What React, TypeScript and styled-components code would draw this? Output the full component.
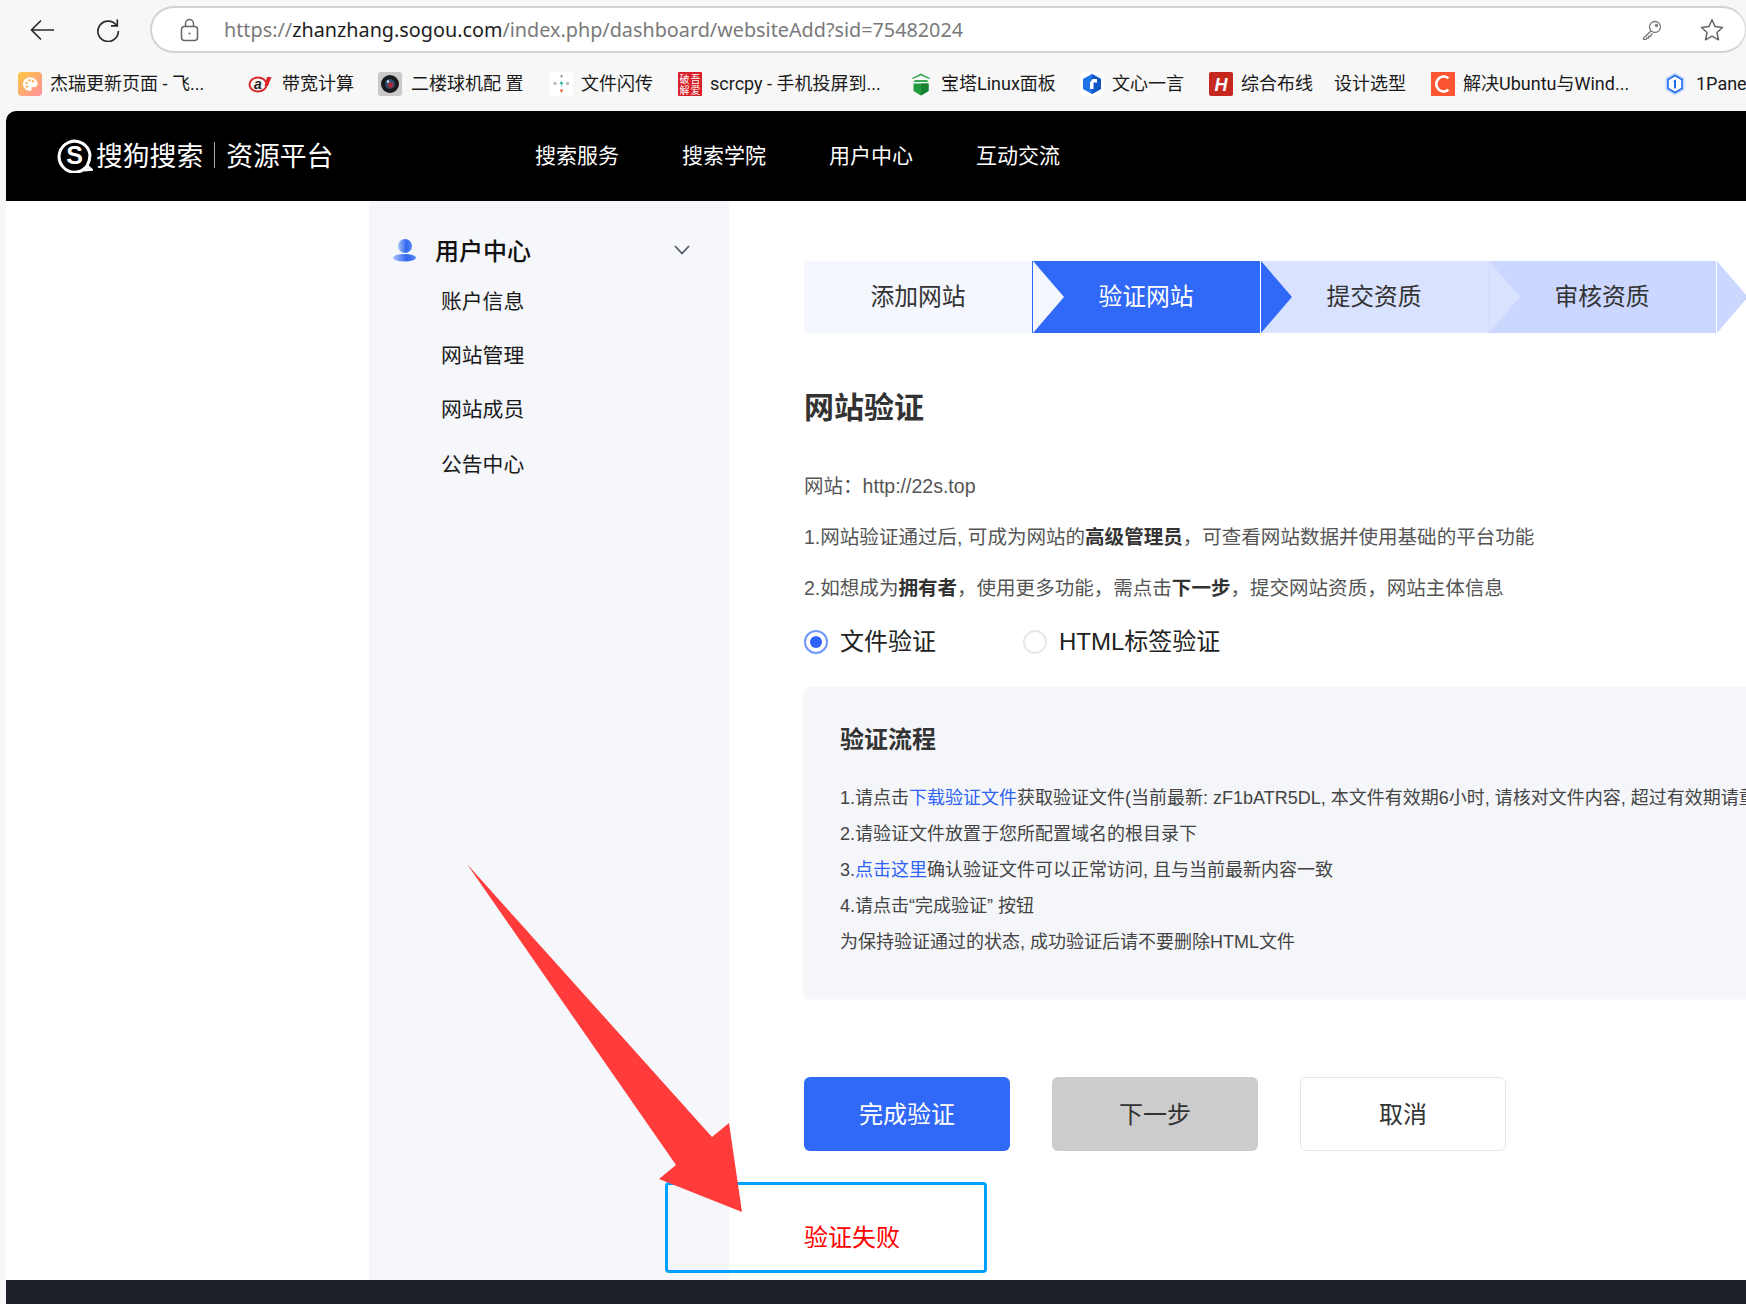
import React from "react";
import styled, { createGlobalStyle } from "styled-components";

const CJK = `"Noto Sans CJK SC", sans-serif`;
const BODY = `"Liberation Sans", ${CJK}`;
const UI = `"Noto Sans", ${CJK}`;
const TAB = `Roboto, ${CJK}`;

const Global = createGlobalStyle`
  html, body { margin: 0; padding: 0; width: 1746px; height: 1304px; overflow: hidden; background: #f7f7f7; }
  #root { width: 1746px; height: 1304px; }
  * { box-sizing: border-box; }
`;

const Shell = styled.div`
  position: relative;
  width: 1746px;
  height: 1304px;
  overflow: hidden;
  background: #f7f7f7;
  display: flex;
  flex-direction: column;
`;

const BrowserChrome = styled.div`
  height: 111px;
  flex: none;
  padding-top: 6px;
`;

const Toolbar = styled.div`
  display: flex;
  align-items: center;
  height: 47px;
  padding-left: 30px;
`;

const ToolIcon = styled.svg<{ $gap: number }>`
  flex: none;
  margin-right: ${(p) => p.$gap}px;
`;

const AddressBar = styled.div`
  flex: 1;
  height: 47px;
  display: flex;
  align-items: center;
  padding-left: 28px;
  background: #fff;
  border: 2px solid #d2d2d2;
  border-right-width: 1px;
  border-radius: 24px;
`;

const Url = styled.div`
  flex: 1;
  margin-left: 25px;
  padding-top: 1px;
  font: 400 19.8px/28px ${UI};
  color: #7a7a7a;
  white-space: nowrap;
  span { color: #1c1c1c; }
`;

const BarIcon = styled.svg<{ $gap: number }>`
  flex: none;
  margin-right: ${(p) => p.$gap}px;
`;

const Bookmarks = styled.div`
  display: flex;
  align-items: center;
  height: 24px;
  margin-top: 19px;
  padding-left: 18px;
  white-space: nowrap;
`;

const Bookmark = styled.div<{ $w: number; $gap: number }>`
  flex: none;
  width: ${(p) => p.$w}px;
  display: flex;
  align-items: center;
  gap: ${(p) => p.$gap}px;
  font: 400 18px/24px ${TAB};
  color: #1a1a1a;
`;

const Page = styled.div`
  flex: 1;
  margin-left: 6px;
  display: flex;
  flex-direction: column;
  background: #fff;
  border-top-left-radius: 10px;
  overflow: hidden;
`;

const Header = styled.header`
  height: 90px;
  flex: none;
  background: #000;
  display: flex;
  align-items: center;
  color: #fff;
  padding-left: 51px;
`;

const Logo = styled.div`
  display: flex;
  align-items: center;
  width: 478px;
  padding-bottom: 2px;
  font: 400 26.8px/36px ${CJK};
`;

const LogoMark = styled.svg`
  flex: none;
  margin-right: 3px;
`;

const LogoDivider = styled.i`
  width: 1px;
  height: 26px;
  margin: 0 11px 0 11px;
  background: #aaa;
`;

const Nav = styled.nav`
  display: flex;
  gap: 63px;
  padding-bottom: 4px;
  font: 400 21px/30px ${CJK};
`;

const Body = styled.div`
  flex: 1;
  min-height: 0;
  display: flex;
  padding-left: 363px;
`;

const Sidebar = styled.aside`
  flex: none;
  width: 360px;
  background: #f5f7fb;
  padding-top: 34px;
`;

const SideTitle = styled.div`
  display: flex;
  align-items: center;
  height: 30px;
  padding-left: 24px;
  font: 500 24px/30px ${CJK};
  color: #111;
`;

const SideIcon = styled.svg`
  flex: none;
`;

const SideTitleText = styled.span`
  margin-left: 19px;
  width: 239px;
`;

const SideItem = styled.div`
  height: 54.2px;
  padding-left: 72px;
  font: 400 20.8px/54px ${CJK};
  color: #1a1a1a;
`;

const SideList = styled.div`
  margin-top: 8px;
`;

const Main = styled.main`
  flex: 1;
  min-width: 0;
  padding: 60px 0 0 75px;
  overflow: hidden;
`;

const Steps = styled.div`
  display: flex;
  height: 72px;
`;

const Step = styled.div<{ $bg: string; $fg: string; $line: string; $z: number }>`
  position: relative;
  flex: none;
  width: 228px;
  height: 72px;
  background: ${(p) => p.$bg};
  color: ${(p) => p.$fg};
  box-shadow: 1px 0 0 ${(p) => p.$line};
  font: 400 23.8px/68px ${CJK};
  text-align: center;
  z-index: ${(p) => p.$z};
  &::after {
    content: "";
    position: absolute;
    top: 0;
    left: calc(100% + 1px);
    width: 31px;
    height: 72px;
    background: ${(p) => p.$bg};
    clip-path: polygon(0 0, 100% 50%, 0 100%);
  }
`;

const Heading = styled.h1`
  margin: 52px 0 0;
  font: 700 30px/40px ${CJK};
  color: #333;
`;

const Intro = styled.div`
  margin-top: 36px;
  font: 400 19.54px/51px ${BODY};
  color: #555;
  white-space: nowrap;
  b { color: #333; font-weight: 700; }
`;

const Radios = styled.div`
  display: flex;
  align-items: center;
  height: 24px;
  margin-top: 16px;
  font: 400 24px/24px ${BODY};
  color: #222;
`;

const Radio = styled.span<{ $on?: boolean; $left?: number }>`
  flex: none;
  width: 24px;
  height: 24px;
  margin-left: ${(p) => p.$left ?? 0}px;
  margin-right: 12px;
  border-radius: 50%;
  border: 2px solid ${(p) => (p.$on ? "#6f96fb" : "#e8e8e8")};
  display: flex;
  align-items: center;
  justify-content: center;
  &::after {
    content: "";
    width: 12px;
    height: 12px;
    border-radius: 50%;
    background: ${(p) => (p.$on ? "#2e62f6" : "transparent")};
  }
`;

const Panel = styled.section`
  margin-top: 33px;
  width: 1100px;
  height: 311px;
  padding: 33px 0 0 36px;
  background: #f5f6fa;
  border-radius: 6px;
  box-shadow: 0 1px 4px rgba(0, 0, 0, 0.05);
  white-space: nowrap;
`;

const PanelTitle = styled.h2`
  margin: 0;
  font: 700 24px/36px ${CJK};
  color: #333;
`;

const PanelLines = styled.div`
  margin-top: 24px;
  font: 400 18px/36px ${BODY};
  color: #444;
  a { color: #2e62f6; text-decoration: none; }
`;

const Actions = styled.div`
  display: flex;
  gap: 42px;
  margin-top: 79px;
`;

const Button = styled.button<{ $kind: "primary" | "muted" | "plain" }>`
  width: 206px;
  height: 74px;
  border-radius: 6px;
  font: 400 24px/30px ${CJK};
  padding: 0 0 2px;
  background: ${(p) => (p.$kind === "primary" ? "#3068f8" : p.$kind === "muted" ? "#cccccc" : "#fff")};
  color: ${(p) => (p.$kind === "primary" ? "#fff" : "#333")};
  border: ${(p) => (p.$kind === "plain" ? "1.5px solid #e6e6e6" : "none")};
`;

const Footer = styled.footer`
  height: 24px;
  flex: none;
  background: #1e2129;
`;

const FailBox = styled.div`
  position: absolute;
  left: 665px;
  top: 1182px;
  width: 322px;
  height: 91px;
  border: 3px solid #00a0ff;
  border-radius: 4px;
  padding: 34px 0 0 136px;
  font: 400 24px/34px ${CJK};
  color: #ff0000;
`;

const ArrowMark = styled.svg`
  position: absolute;
  left: 0;
  top: 0;
  pointer-events: none;
`;

const FaviconSvg = styled.svg`
  flex: none;
`;

const Favicon = ({ children }: { children: React.ReactNode }) => (
  <FaviconSvg width="24" height="24" viewBox="0 0 24 24">
    {children}
  </FaviconSvg>
);

const bookmarks: { w: number; gap?: number; label: string; icon?: React.ReactNode }[] = [
  {
    w: 230,
    label: "杰瑞更新页面 - 飞...",
    icon: (
      <>
        <defs>
          <linearGradient id="fb1" x1="0" y1="0" x2="1" y2="1">
            <stop offset="0" stopColor="#ffc83f" />
            <stop offset="1" stopColor="#ff8f9f" />
          </linearGradient>
        </defs>
        <rect width="24" height="24" rx="4" fill="url(#fb1)" />
        <path d="M12 5.200c-3.900 0-7 3-7 6.800s3.100 6.800 7 6.800c1.300 0 1.800-.8 1.500-1.800-.3-1 .3-2 1.500-2h1.700c1.500 0 2.800-1.200 2.800-3 0-3.700-3.300-6.800-7.500-6.800z" fill="#fff" />
        <circle cx="8.500" cy="11" r="1.200" fill="#ffb25a" />
        <circle cx="11.500" cy="8.300" r="1.200" fill="#ffb25a" />
        <circle cx="15" cy="9.300" r="1.200" fill="#ffb25a" />
        <circle cx="8.900" cy="14.600" r="1.200" fill="#ffb25a" />
      </>
    ),
  },
  {
    w: 130,
    gap: 10,
    label: "带宽计算",
    icon: (
      <>
        <ellipse cx="10" cy="12.500" rx="8.500" ry="7" fill="none" stroke="#d8282c" strokeWidth="2" />
        <text x="10" y="17" textAnchor="middle" fontFamily="Liberation Sans" fontWeight="700" fontStyle="italic" fontSize="14" fill="#222">a</text>
        <path d="M19 5h4.500l-3.500 9h-3.500z" fill="#d8282c" />
      </>
    ),
  },
  {
    w: 171,
    gap: 9,
    label: "二楼球机配 置",
    icon: (
      <>
        <rect width="24" height="24" rx="3" fill="#c9c9c9" />
        <circle cx="12" cy="12" r="9" fill="#1b1b1f" />
        <circle cx="12" cy="12" r="5" fill="#2b4d6e" />
        <circle cx="12.500" cy="13" r="2.600" fill="#b3263a" />
        <circle cx="10" cy="9.500" r="1.300" fill="#cfe3f5" />
      </>
    ),
  },
  {
    w: 129,
    label: "文件闪传",
    icon: (
      <>
        <rect width="24" height="24" rx="4" fill="#fff" />
        <path d="M11 4l1.500-1.500L14 4l-1.500 2z" fill="#9a9a9a" />
        <rect x="4.500" y="10" width="3" height="3" rx="1" fill="#b9b9b9" />
        <rect x="17" y="10" width="3" height="3" rx="1" fill="#b9b9b9" />
        <path d="M12.500 8l-2 4h2l-.5 3 2.500-4.500h-2z" fill="#2cb5a8" />
        <path d="M10.500 17.500h4l-2 3.500z" fill="#f0683a" />
      </>
    ),
  },
  {
    w: 231,
    label: "scrcpy - 手机投屏到...",
    icon: (
      <>
        <rect width="24" height="24" rx="1" fill="#d81e26" />
        <g fontFamily="Noto Sans CJK SC" fontSize="10" fill="#fff" textAnchor="middle">
          <text x="6.500" y="10.500">破</text>
          <text x="17.500" y="10.500">吾</text>
          <text x="6.500" y="22">解</text>
          <text x="17.500" y="22">爱</text>
        </g>
      </>
    ),
  },
  {
    w: 171,
    label: "宝塔Linux面板",
    icon: (
      <>
        <path d="M12 1.500l9 4.500-1 1-8-3.500L4 7 3 6z" fill="#36a852" />
        <path d="M6 8h12l1.500 2h-15z" fill="#36a852" />
        <path d="M4.500 11.500h15V19L12 23.500 4.500 19z" fill="#1f9a3d" />
        <path d="M12 11.500h7.500V19L12 23.500z" fill="#178232" />
      </>
    ),
  },
  {
    w: 129,
    label: "文心一言",
    icon: (
      <>
        <rect width="24" height="24" rx="4" fill="#fff" />
        <path d="M12 2l9 5v10l-9 5-9-5V7z" fill="#1e74e8" />
        <path d="M12 2l9 5v10l-9 5z" fill="#0f56c4" />
        <path d="M12.500 7h4.500v3.500h-3.500V17H10v-6.500z" fill="#fff" />
      </>
    ),
  },
  {
    w: 125,
    label: "综合布线",
    icon: (
      <>
        <rect width="24" height="24" rx="2" fill="#c5281e" />
        <text x="12" y="19" textAnchor="middle" fontFamily="Liberation Sans" fontWeight="700" fontStyle="italic" fontSize="18" fill="#fff">H</text>
      </>
    ),
  },
  { w: 97, label: "设计选型" },
  {
    w: 232,
    label: "解决Ubuntu与Wind...",
    icon: (
      <>
        <rect width="24" height="24" fill="#fc5531" />
        <path d="M17.500 6.200A7.500 7.500 0 1 0 17.500 17.800" fill="none" stroke="#fff" strokeWidth="2.600" />
      </>
    ),
  },
  {
    w: 90,
    gap: 9,
    label: "1Panel",
    icon: (
      <>
        <path d="M12 .5l9.500 5.500v12L12 23.500 2.500 18V6z" fill="#c5d9fb" />
        <path d="M12 3.500l7 4v9l-7 4-7-4v-9z" fill="#fff" stroke="#1f6cf0" strokeWidth="1.600" />
        <path d="M10 9l3-1.500V16.500h-2V10z" fill="#1f6cf0" />
      </>
    ),
  },
];

export default function App() {
  return (
    <Shell>
      <Global />
      <BrowserChrome>
        <Toolbar>
          <ToolIcon $gap={42} width="24" height="24" viewBox="0 0 24 24" fill="none" stroke="#2a2a2a" strokeWidth="1.700">
            <path d="M24 12H1.500M11 2.500L1.500 12l9.500 9.500" />
          </ToolIcon>
          <ToolIcon $gap={30} width="24" height="24" viewBox="0 0 24 24" fill="none" stroke="#2a2a2a" strokeWidth="1.700">
            <path d="M20.500 7.500A10.200 10.200 0 1 0 22.300 13" />
            <path d="M21.300 1.500v6.300h-6.300" />
          </ToolIcon>
          <AddressBar>
            <BarIcon $gap={0} width="19" height="24" viewBox="0 0 19 24" fill="none" stroke="#666" strokeWidth="1.500">
              <rect x="1.500" y="8.500" width="16" height="14" rx="3" />
              <path d="M5.500 8.500V5.500a4 4 0 0 1 8 0v3" />
              <circle cx="9.500" cy="15.500" r="1" fill="#666" stroke="none" />
            </BarIcon>
            <Url>
              https://<span>zhanzhang.sogou.com</span>/index.php/dashboard/websiteAdd?sid=75482024
            </Url>
            <BarIcon $gap={38} width="20" height="20" viewBox="0 0 20 20" fill="none" stroke="#777" strokeWidth="1.300">
              <circle cx="13" cy="7" r="5.500" />
              <circle cx="14.500" cy="5.500" r="1" />
              <path d="M9 11l-7.500 7v1.500H4l1-1.500h1.500V16.500H8l2.500-3" />
            </BarIcon>
            <BarIcon $gap={21} width="24" height="24" viewBox="0 0 24 24" fill="none" stroke="#666" strokeWidth="1.500" strokeLinejoin="round">
              <path d="M12 1.800l3.100 6.800 7.400.9-5.500 5 1.500 7.300L12 18.200l-6.500 3.600L7 14.500l-5.500-5 7.400-.9z" />
            </BarIcon>
          </AddressBar>
        </Toolbar>
        <Bookmarks>
          {bookmarks.map((b) => (
            <Bookmark key={b.label} $w={b.w} $gap={b.gap ?? 8}>
              {b.icon && <Favicon>{b.icon}</Favicon>}
              <span>{b.label}</span>
            </Bookmark>
          ))}
        </Bookmarks>
      </BrowserChrome>

      <Page>
        <Header>
          <Logo>
            <LogoMark width="36" height="36" viewBox="0 0 36 36">
              <path d="M30 29A15.500 15.500 0 1 1 33 18c0 4-1 7-3 11l4 3.500-7 .5" fill="none" stroke="#fff" strokeWidth="3" />
              <text x="17.500" y="26.500" textAnchor="middle" fontFamily="Liberation Sans" fontWeight="700" fontSize="25" fill="#fff">S</text>
            </LogoMark>
            搜狗搜索
            <LogoDivider />
            资源平台
          </Logo>
          <Nav>
            <span>搜索服务</span>
            <span>搜索学院</span>
            <span>用户中心</span>
            <span>互动交流</span>
          </Nav>
        </Header>
        <Body>
          <Sidebar>
            <SideTitle>
              <SideIcon width="23" height="23" viewBox="0 0 23 23">
                <defs>
                  <linearGradient id="ug" x1="0" y1="0" x2="1" y2="0">
                    <stop offset="0" stopColor="#a9c3fb" />
                    <stop offset="0.6" stopColor="#2f66ee" />
                    <stop offset="1" stopColor="#5d8bf5" />
                  </linearGradient>
                </defs>
                <circle cx="12" cy="7" r="7" fill="url(#ug)" />
                <ellipse cx="11.500" cy="18.800" rx="11.500" ry="3.800" fill="url(#ug)" />
              </SideIcon>
              <SideTitleText>用户中心</SideTitleText>
              <svg width="16" height="10" viewBox="0 0 16 10" fill="none" stroke="#555a66" strokeWidth="1.800">
                <path d="M1 1l7 7.500L15 1" />
              </svg>
            </SideTitle>
            <SideList>
              <SideItem>账户信息</SideItem>
              <SideItem>网站管理</SideItem>
              <SideItem>网站成员</SideItem>
              <SideItem>公告中心</SideItem>
            </SideList>
          </Sidebar>
          <Main>
            <Steps>
              <Step $bg="#f5f7ff" $fg="#333" $line="#3068f8" $z={4}>添加网站</Step>
              <Step $bg="#3068f8" $fg="#fff" $line="#fff" $z={3}>验证网站</Step>
              <Step $bg="#d9e2ff" $fg="#333" $line="#d3ddfb" $z={2}>提交资质</Step>
              <Step $bg="#cbd7ff" $fg="#333" $line="#fff" $z={1}>审核资质</Step>
            </Steps>
            <Heading>网站验证</Heading>
            <Intro>
              <div>网站：http://22s.top</div>
              <div>1.网站验证通过后, 可成为网站的<b>高级管理员</b>，可查看网站数据并使用基础的平台功能</div>
              <div>2.如想成为<b>拥有者</b>，使用更多功能，需点击<b>下一步</b>，提交网站资质，网站主体信息</div>
            </Intro>
            <Radios>
              <Radio $on />
              <span>文件验证</span>
              <Radio $left={87} />
              <span>HTML标签验证</span>
            </Radios>
            <Panel>
              <PanelTitle>验证流程</PanelTitle>
              <PanelLines>
                <div>1.请点击<a>下载验证文件</a>获取验证文件(当前最新: zF1bATR5DL, 本文件有效期6小时, 请核对文件内容, 超过有效期请重新下载)</div>
                <div>2.请验证文件放置于您所配置域名的根目录下</div>
                <div>3.<a>点击这里</a>确认验证文件可以正常访问, 且与当前最新内容一致</div>
                <div>4.请点击“完成验证” 按钮</div>
                <div>为保持验证通过的状态, 成功验证后请不要删除HTML文件</div>
              </PanelLines>
            </Panel>
            <Actions>
              <Button $kind="primary">完成验证</Button>
              <Button $kind="muted">下一步</Button>
              <Button $kind="plain">取消</Button>
            </Actions>
          </Main>
        </Body>
        <Footer />
      </Page>

      <FailBox>验证失败</FailBox>
      <ArrowMark width="1746" height="1304" viewBox="0 0 1746 1304">
        <polygon points="467,864 712,1137 729,1123 742,1212 659,1179 676,1165" fill="#ff3b3b" />
      </ArrowMark>
    </Shell>
  );
}
